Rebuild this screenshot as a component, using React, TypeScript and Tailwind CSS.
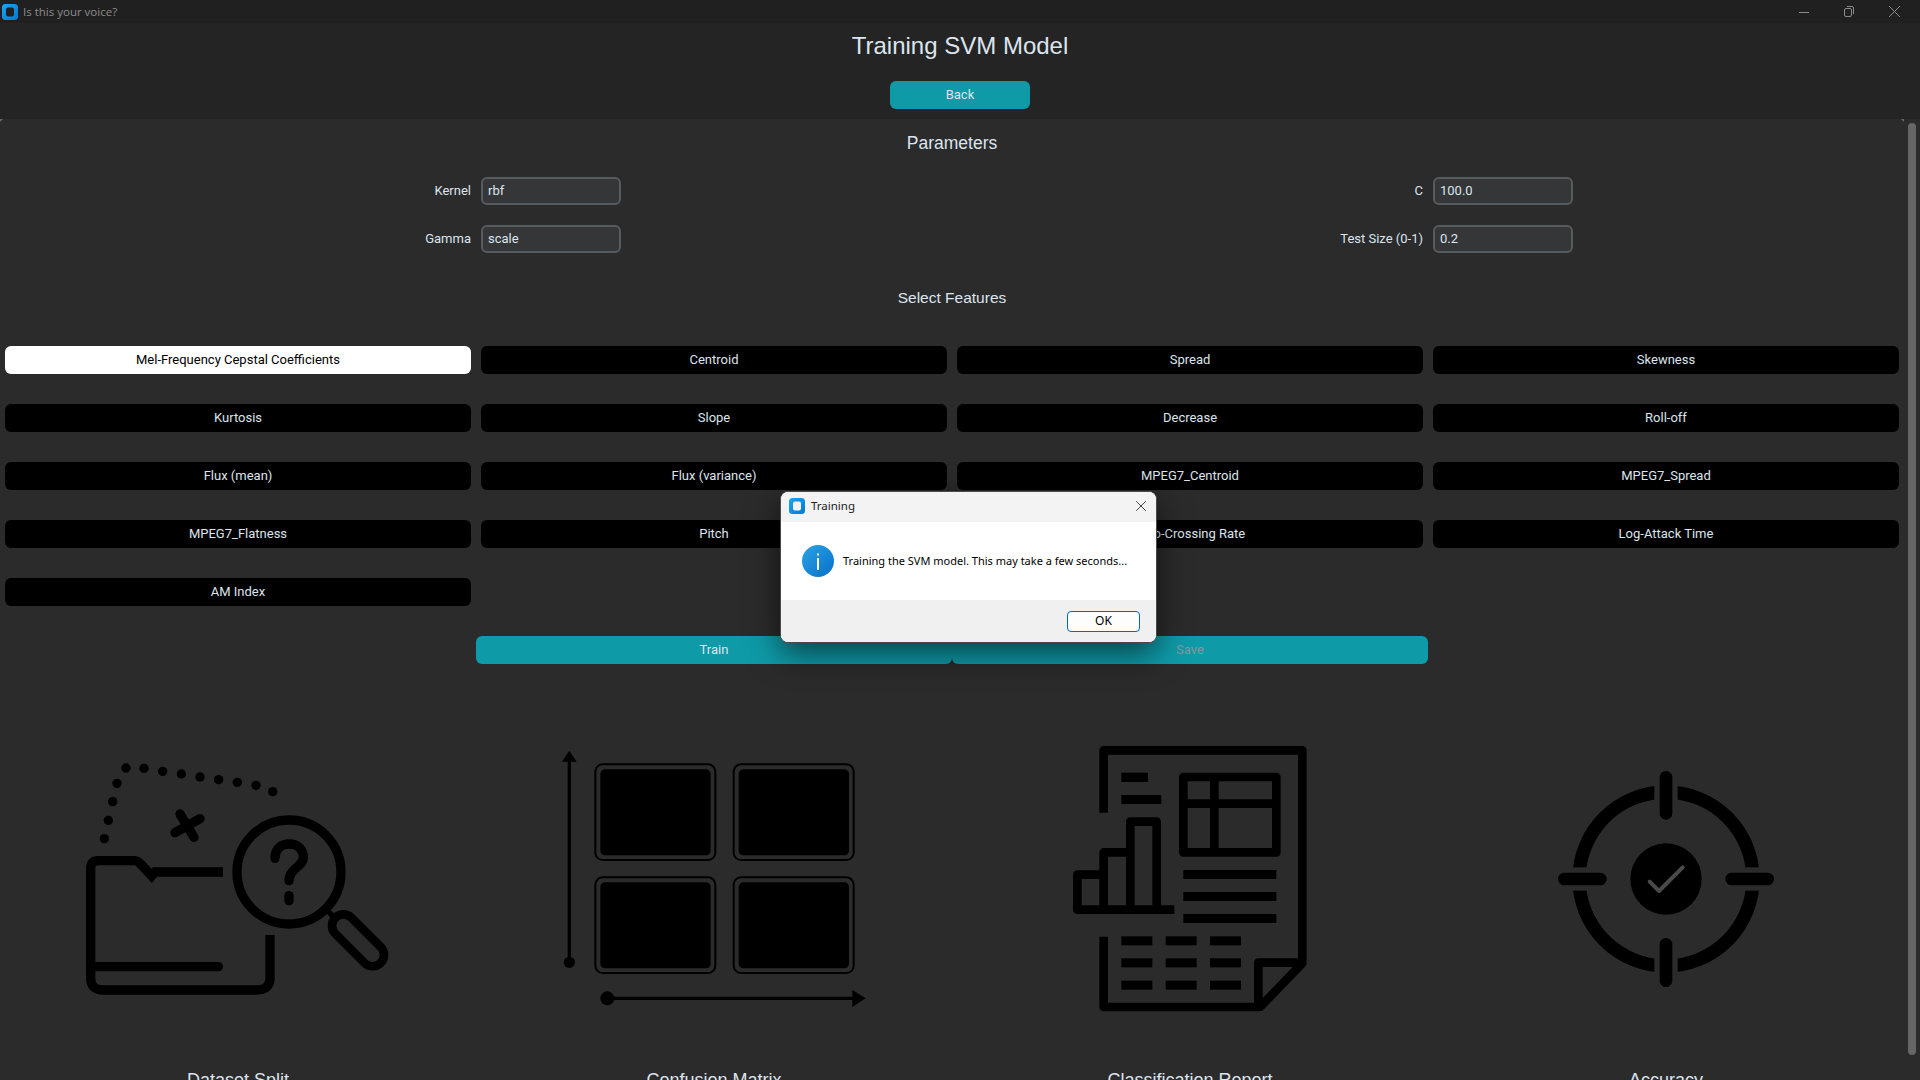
import { X } from 'lucide-react'

const features = [
  'Mel-Frequency Cepstal Coefficients',
  'Centroid',
  'Spread',
  'Skewness',
  'Kurtosis',
  'Slope',
  'Decrease',
  'Roll-off',
  'Flux (mean)',
  'Flux (variance)',
  'MPEG7_Centroid',
  'MPEG7_Spread',
  'MPEG7_Flatness',
  'Pitch',
  'Zero-Crossing Rate',
  'Log-Attack Time',
  'AM Index',
]

function AppIcon({ inner }: { inner: string }) {
  return (
    <svg width="16" height="16" viewBox="0 0 16 16" className="shrink-0">
      <defs>
        <linearGradient id={`app-${inner}`} x1="0" y1="0" x2="1" y2="1">
          <stop offset="0" stopColor="#19a8f5" />
          <stop offset="1" stopColor="#0078d4" />
        </linearGradient>
      </defs>
      <rect width="16" height="16" rx="3.5" fill={`url(#app-${inner})`} />
      <rect x="4" y="3.5" width="8" height="9" rx="2" fill={inner} />
    </svg>
  )
}

function Param({ label, value }: { label: string; value: string }) {
  return (
    <>
      <label className="flex items-center justify-end text-[13px] text-[#dce4ee]">{label}</label>
      <input
        readOnly
        value={value}
        className="h-[28px] w-[140px] rounded-[6px] border-2 border-[#565b5e] bg-[#343638] px-[5px] pb-[2px] text-[13px] text-[#dce4ee] outline-none"
      />
    </>
  )
}

function DatasetIcon() {
  const dots = [
    [198, 114], [252, 115], [308, 124], [364, 132], [420, 141], [476, 149], [532, 157], [588, 166], [638, 185],
    [171, 160], [158, 215], [145, 271], [133, 326],
  ]
  return (
    <svg width="320" height="320" viewBox="54 -33 960 960" fill="none" stroke="#000" strokeWidth="28">
      {dots.map(([cx, cy]) => (
        <circle key={`${cx}-${cy}`} cx={cx} cy={cy} r="14" fill="#000" stroke="none" />
      ))}
      <path d="M360 252 L402 322 M345 308 L420 266" strokeLinecap="round" />
      <path d="M489 426 H285 L275 438 L240 400 Q232 392 222 392 H115 Q92 392 92 415 V745 Q92 780 130 780 H590 Q630 780 630 745 V615" />
      <path d="M92 710 H475" strokeLinecap="round" />
      <circle cx="687" cy="426" r="156" />
      <path d="M645 385 C645 355 665 342 687 342 C715 342 730 360 730 382 C730 410 687 415 687 452" strokeLinecap="round" />
      <path d="M687 497 V512" strokeLinecap="round" />
      <path d="M805 545 L825 565" strokeWidth="16" />
      <rect x="798" y="597" width="192" height="68" rx="34" strokeWidth="26" transform="rotate(45 894 631)" />
    </svg>
  )
}

function MatrixIcon() {
  const cells = [
    [163, 100],
    [578, 100],
    [163, 439],
    [578, 439],
  ]
  return (
    <svg width="320" height="320" viewBox="42 -33 960 960">
      <path d="M88 90 V697 M202 805 H940" stroke="#000" strokeWidth="10" />
      <path d="M88 62 L66 95 H110 Z M937 780 L977 805 L937 831 Z" fill="#000" />
      <circle cx="88" cy="697" r="17" fill="#000" />
      <circle cx="202" cy="805" r="21" fill="#000" />
      {cells.map(([x, y]) => (
        <g key={`${x}-${y}`}>
          <rect x={x + 3} y={y + 3} width="360" height="287" rx="22" fill="none" stroke="#000" strokeWidth="6" />
          <rect x={x + 18} y={y + 18} width="331" height="258" rx="14" fill="#000" />
        </g>
      ))}
    </svg>
  )
}

function ReportIcon() {
  const small = [214, 347, 480]
  const smallRows = [619, 685, 752]
  return (
    <svg width="320" height="320" viewBox="-60 -33 960 960" fill="none" stroke="#000" strokeWidth="26" strokeLinejoin="round">
      <path d="M161 248 V61 H757 V700 L630 831 H161 V620" />
      <path d="M757 698 H625 V831" />
      <rect x="400" y="141" width="279" height="226" />
      <path d="M493 141 V367 M400 221 H679" />
      <path d="M373 539 H82 V434 H161 M161 539 V367 H241 M241 539 V275 H320 V539" />
      <g fill="#000" stroke="none">
        <rect x="214" y="128" width="80" height="28" />
        <rect x="214" y="195" width="120" height="27" />
        <rect x="400" y="420" width="279" height="27" />
        <rect x="400" y="486" width="279" height="27" />
        <rect x="400" y="552" width="279" height="27" />
        {smallRows.map((y) =>
          small.map((x) => <rect key={`${x}-${y}`} x={x} y={y} width="93" height="27" />),
        )}
      </g>
    </svg>
  )
}

function AccuracyIcon() {
  return (
    <svg width="320" height="320" viewBox="-42 -63 960 960">
      <circle cx="438" cy="417" r="261" fill="none" stroke="#000" strokeWidth="40" />
      <rect x="403" y="120" width="70" height="594" fill="#2b2b2b" />
      <rect x="141" y="382" width="594" height="70" fill="#2b2b2b" />
      <path d="M438 112 V220 M438 613 V722 M133 417 H241 M635 417 H743" stroke="#000" strokeWidth="38" strokeLinecap="round" />
      <circle cx="438" cy="417" r="107" fill="#000" />
      <path d="M389 425 L417 453 L488 382" fill="none" stroke="#4a4a4a" strokeWidth="12" strokeLinecap="round" strokeLinejoin="round" />
    </svg>
  )
}

export default function App() {
  return (
    <div className="relative flex h-screen w-full flex-col overflow-hidden bg-[#2b2b2b] font-[Roboto,sans-serif] text-[#dce4ee]">
      {/* Title bar */}
      <div className="flex h-[23px] shrink-0 items-center bg-[#202020] pl-[2px] pr-[20px]">
        <AppIcon inner="#202020" />
        <span className="ml-[5px] font-['Open_Sans',sans-serif] text-[11.5px] text-[#8c8c8c]">Is this your voice?</span>
        <div className="ml-auto flex items-center gap-[35px]">
          <svg width="10" height="10" viewBox="0 0 10 10" stroke="#8a8a8a" fill="none"><path d="M0 5.5 H10" /></svg>
          <svg width="10" height="11" viewBox="0 0 10 11" stroke="#8a8a8a" fill="none"><rect x="0.5" y="2.5" width="7" height="8" rx="1.5" /><path d="M3 .5 H8 Q9.5 .5 9.5 2 V8" /></svg>
          <svg width="11" height="11" viewBox="0 0 11 11" stroke="#8a8a8a" fill="none"><path d="M0 0 L11 11 M11 0 L0 11" /></svg>
        </div>
      </div>

      {/* Header */}
      <div className="flex h-[96px] shrink-0 flex-col items-center bg-[#242424]">
        <h1 className="mt-[5px] font-['Liberation_Sans',sans-serif] text-[24px] leading-[36px]">Training SVM Model</h1>
        <button className="mt-[17px] h-[28px] w-[140px] rounded-[6px] bg-[#0f9aa8] text-[13px]">Back</button>
      </div>

      <div className="relative flex min-h-0 flex-1">
        {/* Frame corners */}
        <div className="absolute left-0 top-0 h-0 w-0 border-r-[3px] border-t-[3px] border-r-transparent border-t-[#666666]" />
        <div className="absolute left-[1901px] top-0 h-0 w-0 border-l-[3px] border-t-[3px] border-l-transparent border-t-[#666666]" />

        {/* Scrollable content */}
        <div className="w-[1904px] shrink-0 overflow-hidden px-[5px]">
          <h2 className="mt-[12px] text-center font-['Liberation_Sans',sans-serif] text-[17.5px] leading-[24px]">Parameters</h2>

          <div className="mt-[22px] grid grid-cols-4 gap-x-[10px] gap-y-[20px]">
            <Param label="Kernel" value="rbf" />
            <Param label="C" value="100.0" />
            <Param label="Gamma" value="scale" />
            <Param label="Test Size (0-1)" value="0.2" />
          </div>

          <h2 className="mt-[33px] text-center font-['Liberation_Sans',sans-serif] text-[15.5px] leading-[24px]">Select Features</h2>

          <div className="mt-[36px] grid grid-cols-4 gap-x-[10px] gap-y-[30px]">
            {features.map((name, i) => (
              <button
                key={name}
                className={
                  i === 0
                    ? 'h-[28px] rounded-[6px] bg-white text-[13px] text-black'
                    : 'h-[28px] rounded-[6px] bg-black text-[13px] text-[#dce4ee]'
                }
              >
                {name}
              </button>
            ))}
          </div>

          <div className="mt-[30px] flex justify-center">
            <button className="h-[28px] w-[476px] rounded-[6px] bg-[#0f9aa8] text-[13px]">Train</button>
            <button className="h-[28px] w-[476px] rounded-[6px] bg-[#0f9aa8] text-[13px] text-[#7f9a9e]">Save</button>
          </div>

          <div className="mt-[55px] grid grid-cols-4 gap-x-[10px]">
            {[
              { title: 'Dataset Split', icon: <DatasetIcon /> },
              { title: 'Confusion Matrix', icon: <MatrixIcon /> },
              { title: 'Classification Report', icon: <ReportIcon /> },
              { title: 'Accuracy', icon: <AccuracyIcon /> },
            ].map((item) => (
              <div key={item.title} className="flex flex-col items-center">
                {item.icon}
                <span className="mt-[29px] font-['Liberation_Sans',sans-serif] text-[18px] leading-[24px]">{item.title}</span>
              </div>
            ))}
          </div>
        </div>

        {/* Scrollbar */}
        <div className="flex-1 px-[4px] pt-[4px]">
          <div className="h-[932px] w-[8px] rounded-[4px] bg-[#666666]" />
        </div>
      </div>

      {/* Message box */}
      <div className="absolute left-[780px] top-[491px] flex h-[152px] w-[377px] flex-col overflow-hidden rounded-[8px] border border-[#4a4a4a] bg-white font-['Noto_Sans',sans-serif] text-black shadow-[0_10px_32px_rgba(0,0,0,0.6)]">
        <div className="flex h-[30px] shrink-0 items-center bg-[#f3f3f3] pb-[2px] pl-[8px] pr-[6px]">
          <AppIcon inner="#f3f3f3" />
          <span className="ml-[6px] text-[11.5px] text-[#222222]">Training</span>
          <X size={18} strokeWidth={1.1} className="ml-auto text-[#222222]" />
        </div>
        <div className="flex flex-1 items-center pl-[21px]">
          <svg width="32" height="32" viewBox="0 0 32 32" className="shrink-0">
            <defs>
              <linearGradient id="info" x1="0" y1="0" x2="1" y2="1">
                <stop offset="0" stopColor="#2ba3e6" />
                <stop offset="1" stopColor="#0670c8" />
              </linearGradient>
            </defs>
            <circle cx="16" cy="16" r="16" fill="url(#info)" />
            <rect x="15" y="13" width="2" height="12" fill="#fff" />
            <rect x="15" y="8.5" width="2" height="2" fill="#fff" />
          </svg>
          <span className="ml-[9px] mt-[1px] whitespace-nowrap text-[11px]">Training the SVM model. This may take a few seconds...</span>
        </div>
        <div className="flex h-[42px] shrink-0 items-center justify-end bg-[#f0f0f0] pr-[16px]">
          <button className="h-[21px] w-[73px] rounded-[4px] border border-[#0067c0] bg-[#fdfdfd] text-[12px] text-black">OK</button>
        </div>
      </div>
    </div>
  )
}
